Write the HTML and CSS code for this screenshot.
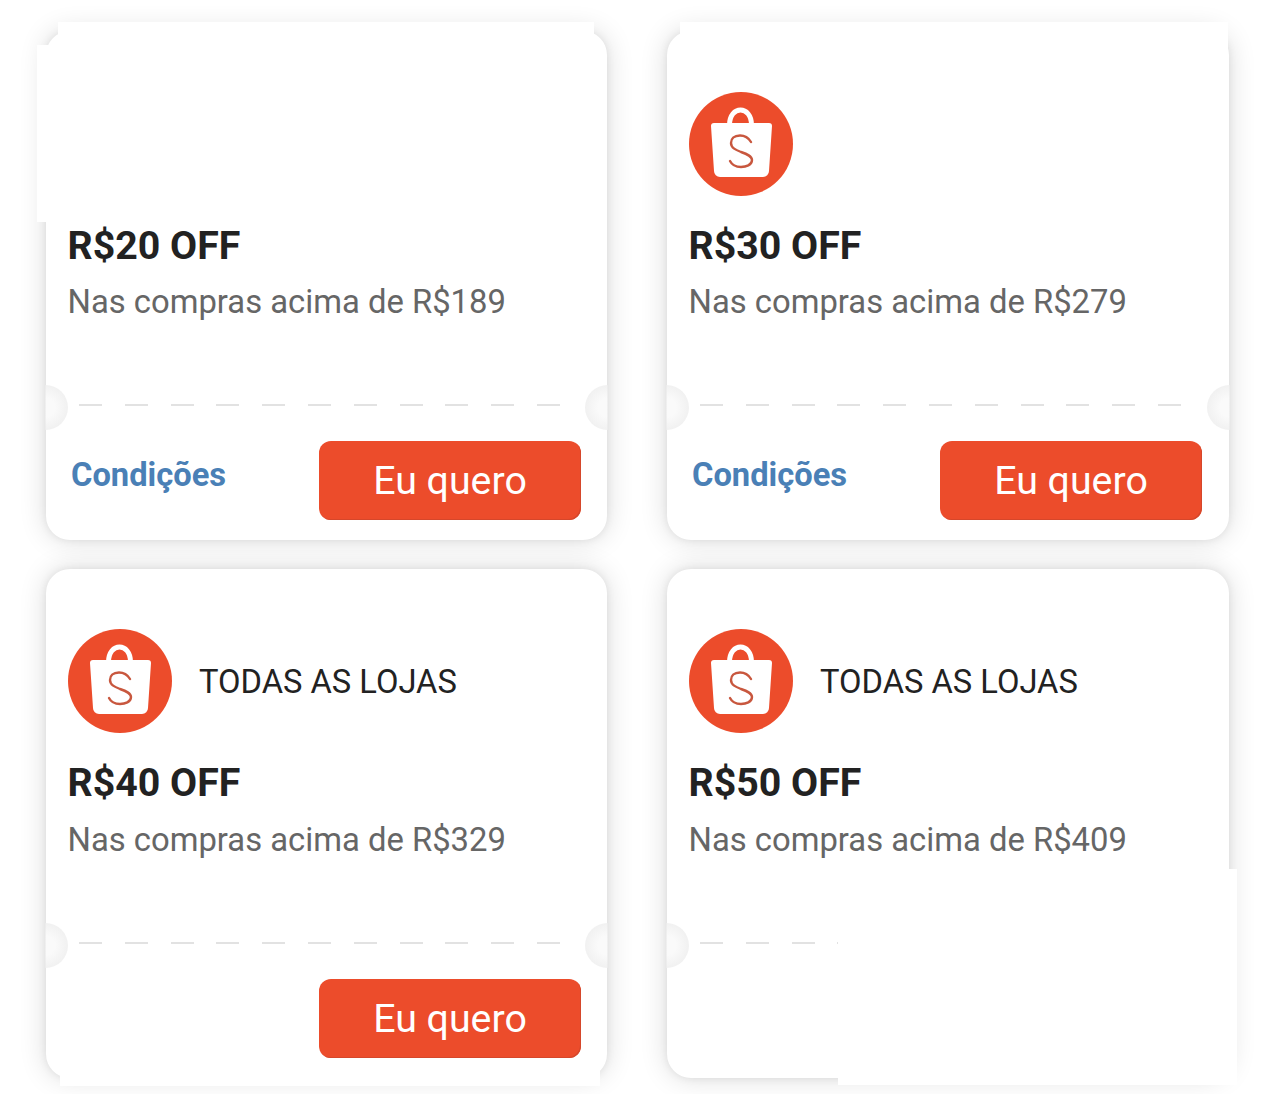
FILE: index.html
```html
<!DOCTYPE html>
<html lang="pt-BR">
<head>
  <meta charset="UTF-8">
  <title>Cupons</title>
  <meta name="viewport" content="width=device-width, initial-scale=1.0">
  <link rel="stylesheet" href="styles.css">
</head>
<body>
  <svg class="defs" width="0" height="0" aria-hidden="true">
    <symbol id="sacola" viewBox="0 0 104 104">
      <circle cx="52" cy="52" r="52" fill="#ec4c2b"/>
      <path d="M40.5 33C40.5 13 62.5 13 62.5 33" fill="none" stroke="#fff" stroke-width="5"/>
      <path d="M22 34a3 3 0 0 1 3-3h55a3 3 0 0 1 3 3l-3 45a6 6 0 0 1-6 6H31a6 6 0 0 1-6-6z" fill="#fff"/>
      <path d="M62 50C59 45 55 43.500 51 43.500C45 43.500 42 47 42 51C42 56 47 58 52 60C58 62 63 64 63 68C63 73 57 75 52 75C47 75 43 73 41 69" fill="none" stroke="#c8573e" stroke-width="2.400" stroke-linecap="round"/>
    </symbol>
  </svg>

  <main class="grade">
    <section class="cupom alto">
      <div class="topo"></div>
      <h2>R$20 OFF</h2>
      <p class="regra">Nas compras acima de R$189</p>
      <div class="picote"></div>
      <div class="rodape">
        <a class="condicoes" href="#">Condições</a>
        <button class="botao">Eu quero</button>
      </div>
      <!-- retalhos brancos por cima da sombra -->
      <div class="retalho ret-topo"></div>
      <div class="retalho ret-lateral"></div>
    </section>

    <section class="cupom alto">
      <div class="topo">
        <svg class="logo"><use href="#sacola"/></svg>
      </div>
      <h2>R$30 OFF</h2>
      <p class="regra">Nas compras acima de R$279</p>
      <div class="picote"></div>
      <div class="rodape">
        <a class="condicoes" href="#">Condições</a>
        <button class="botao">Eu quero</button>
      </div>
      <div class="retalho ret-topo-dir"></div>
    </section>

    <section class="cupom">
      <div class="topo">
        <svg class="logo"><use href="#sacola"/></svg>
        <span class="lojas">TODAS AS LOJAS</span>
      </div>
      <h2>R$40 OFF</h2>
      <p class="regra">Nas compras acima de R$329</p>
      <div class="picote"></div>
      <div class="rodape so-botao">
        <button class="botao">Eu quero</button>
      </div>
      <div class="retalho ret-base"></div>
    </section>

    <section class="cupom">
      <div class="topo">
        <svg class="logo"><use href="#sacola"/></svg>
        <span class="lojas">TODAS AS LOJAS</span>
      </div>
      <h2>R$50 OFF</h2>
      <p class="regra">Nas compras acima de R$409</p>
      <div class="picote"></div>
      <div class="retalho ret-canto"></div>
    </section>
  </main>
</body>
</html>
```

FILE: styles.css
```css
body {
  margin: 0;
  height: 1094px;
  overflow: hidden;
  background: #fff;
  font-family: Roboto, Arial, sans-serif;
}

.defs {
  position: absolute;
}

.grade {
  display: grid;
  grid-template-columns: 561px 562px;
  grid-auto-rows: 509px;
  column-gap: 60px;
  row-gap: 29px;
  padding: 31px 0 0 46px;
}

.cupom {
  position: relative;
  padding: 0 22px;
  background: #fff;
  border-radius: 24px;
  box-shadow: 0 0 28px rgba(0, 0, 0, 0.14), 0 0 8px rgba(0, 0, 0, 0.08);
}

/* furos do picote: so a metade dentro do cartao aparece */
.cupom::before,
.cupom::after {
  content: "";
  position: absolute;
  top: 354px;
  width: 45px;
  height: 45px;
  border-radius: 50%;
  background: radial-gradient(circle, #fafafa 30%, #f0f0f0 75%, #dedede 100%);
}

.cupom::before {
  left: -23px;
  clip-path: inset(0 0 0 50%);
}

.cupom::after {
  right: -23px;
  clip-path: inset(0 50% 0 0);
}

.topo {
  display: flex;
  align-items: center;
  gap: 27px;
  height: 104px;
  padding-top: 60px;
}

.alto .topo {
  padding-top: 61px;
}

.logo {
  width: 104px;
  height: 104px;
  flex: none;
}

.lojas {
  margin-top: 2px;
  font-size: 32.7px;
  color: #222;
}

h2 {
  margin: 28px 0 0 -0.5px;
  font-size: 39.3px;
  line-height: 44px;
  font-weight: 700;
  color: #222;
}

.regra {
  margin: 15px 0 0 -0.5px;
  font-size: 32.8px;
  line-height: 40px;
  color: #666;
}

.alto .regra {
  margin-top: 14px;
}

.picote {
  height: 2px;
  margin: 82px 23px 0 11px;
  background: repeating-linear-gradient(90deg, #e2e2e2 0 23px, transparent 23px 45.8px);
}

.rodape {
  display: flex;
  justify-content: space-between;
  align-items: flex-start;
  margin: 35px 4px 0 3px;
}

.cupom:nth-child(even) .rodape {
  margin-right: 5px;
}

.so-botao {
  justify-content: flex-end;
}

.condicoes {
  margin-top: 15px;
  font-size: 32.7px;
  font-weight: 700;
  line-height: 38px;
  color: #4a80b6;
  text-decoration: none;
}

.botao {
  width: 262px;
  height: 79px;
  padding-top: 2px;
  border: none;
  border-radius: 12px;
  background: #ec4c2b;
  box-shadow: inset -1px -1px 0 #d5472b;
  color: #fff;
  font-family: inherit;
  font-size: 39.3px;
}

.retalho {
  position: absolute;
  z-index: 1;
  background: #fff;
}

.ret-topo {
  top: -9px;
  left: 12px;
  width: 536px;
  height: 30px;
}

.ret-lateral {
  top: 14px;
  left: -9px;
  width: 30px;
  height: 177px;
}

.ret-topo-dir {
  top: -9px;
  left: 13px;
  width: 548px;
  height: 30px;
}

.ret-base {
  bottom: -8px;
  left: 14px;
  width: 540px;
  height: 26px;
}

.ret-canto {
  top: 300px;
  left: 171px;
  width: 399px;
  height: 216px;
}
```
